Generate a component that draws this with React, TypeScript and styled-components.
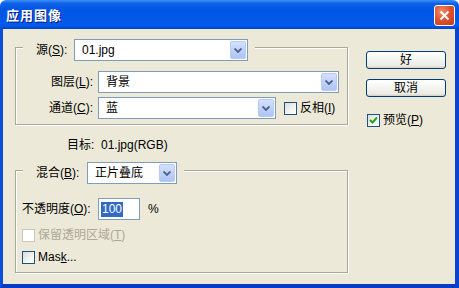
import React from "react";
import styled, { createGlobalStyle } from "styled-components";

const GlobalStyle = createGlobalStyle`
  html, body {
    margin: 0;
    padding: 0;
    background: #ffffff;
  }
  body {
    font-family: "Liberation Sans", "Noto Sans CJK SC", sans-serif;
    font-size: 12px;
    color: #000000;
  }
`;

const Window = styled.div`
  width: 459px;
  height: 288px;
  display: flex;
  flex-direction: column;
`;

const TitleBar = styled.div`
  height: 29px;
  flex: none;
  display: flex;
  align-items: center;
  justify-content: space-between;
  padding: 0 4px 0 6px;
  border-radius: 6px 6px 0 0;
  background: linear-gradient(
    180deg,
    #3d8ff7 0%,
    #0f62e8 12%,
    #0054e3 35%,
    #0059eb 75%,
    #005aec 88%,
    #0043d0 100%
  );
`;

const Title = styled.span`
  color: #ffffff;
  font-family: "Noto Sans CJK SC", sans-serif;
  font-weight: 700;
  font-size: 13px;
  text-shadow: 1px 1px #0a1a7a;
  letter-spacing: 1px;
`;

const CloseButton = styled.div`
  width: 21px;
  height: 21px;
  box-sizing: border-box;
  border: 1px solid #ffffff;
  border-radius: 3px;
  background: radial-gradient(circle at 35% 30%, #f09070 0%, #e05530 45%, #c1381a 100%);
  display: flex;
  align-items: center;
  justify-content: center;
  margin-top: 1px;
`;

const Body = styled.div`
  flex: 1;
  display: flex;
  background: #ece9d8;
  border-left: 3px solid #0a4fdc;
  border-right: 4px solid #0844d4;
  border-bottom: 4px solid #0a3bc4;
`;

const LeftColumn = styled.div`
  width: 333px;
  margin-left: 12px;
  padding-top: 18px;
  display: flex;
  flex-direction: column;
`;

const RightColumn = styled.div`
  width: 82px;
  margin-left: 18px;
  padding-top: 22px;
  display: flex;
  flex-direction: column;
`;

const Group = styled.div<{ $height: number; $top?: number }>`
  box-sizing: border-box;
  height: ${(p) => p.$height}px;
  margin-top: ${(p) => p.$top ?? 0}px;
  border: 1px solid #aca899;
  box-shadow: inset 1px 1px #ffffff, 1px 1px #ffffff;
  display: flex;
  flex-direction: column;
`;

const GroupHeader = styled.div`
  align-self: flex-start;
  display: flex;
  align-items: center;
  margin: -9px 0 0 7px;
  padding: 0 7px 0 13px;
  background: #ece9d8;
`;

const Label = styled.span<{ $disabled?: boolean; $width?: number }>`
  white-space: nowrap;
  color: ${(p) => (p.$disabled ? "#aca899" : "#000000")};
  line-height: 14px;
  ${(p) => (p.$width ? `width: ${p.$width}px; flex: none;` : "")}
`;

const Key = styled.span`
  text-decoration: underline;
  text-underline-offset: 1px;
`;

const FieldRow = styled.div<{ $top: number }>`
  display: grid;
  grid-template-columns: 82px auto;
  align-items: center;
  margin-top: ${(p) => p.$top}px;
`;

const RowLabel = styled(Label)`
  text-align: right;
  padding-right: 5px;
`;

const Inline = styled.div`
  display: flex;
  align-items: center;
  gap: 8px;
`;

const SelectBox = styled.div<{ $width: number }>`
  box-sizing: border-box;
  width: ${(p) => p.$width}px;
  height: 22px;
  border: 1px solid #7f9db9;
  background: #ffffff;
  display: flex;
  align-items: center;
  justify-content: space-between;
  padding: 1px 1px 1px 7px;
`;

const SelectValue = styled.span`
  line-height: 14px;
`;

const DropButton = styled.div`
  box-sizing: border-box;
  width: 16px;
  height: 100%;
  border: 1px solid #b9cbf5;
  border-radius: 2px;
  background: linear-gradient(180deg, #d4e0fd 0%, #c0d2fa 50%, #aec4f4 100%);
  display: flex;
  align-items: center;
  justify-content: center;
`;

const Target = styled.div`
  margin-top: 13px;
  padding-left: 52px;
  line-height: 14px;
`;

const OpacityRow = styled.div`
  display: flex;
  align-items: center;
  margin-top: 14px;
  padding-left: 6px;
`;

const TextInput = styled.div`
  box-sizing: border-box;
  width: 42px;
  height: 22px;
  margin-left: 3px;
  border: 1px solid #7f9db9;
  background: #ffffff;
  display: flex;
  align-items: center;
  padding-left: 2px;
`;

const Selected = styled.span`
  background: #316ac5;
  color: #ffffff;
  line-height: 15px;
  padding: 0 1px;
`;

const Percent = styled.span`
  margin-left: 8px;
`;

const CheckRow = styled.div<{ $top: number; $indent: number }>`
  display: flex;
  align-items: center;
  gap: 3px;
  margin-top: ${(p) => p.$top}px;
  padding-left: ${(p) => p.$indent}px;
`;

const Box = styled.div<{ $disabled?: boolean }>`
  box-sizing: border-box;
  width: 13px;
  height: 13px;
  flex: none;
  border: 1px solid ${(p) => (p.$disabled ? "#cac8bb" : "#1c5180")};
  background: ${(p) =>
    p.$disabled ? "#ffffff" : "linear-gradient(135deg, #dcdcd7 0%, #f4f4f0 60%, #ffffff 100%)"};
  display: flex;
  align-items: center;
  justify-content: center;
`;

const Button = styled.div<{ $top: number }>`
  box-sizing: border-box;
  height: 18px;
  width: 80px;
  margin-top: ${(p) => p.$top}px;
  border: 1px solid #003c74;
  border-radius: 3px;
  background: linear-gradient(180deg, #ffffff 0%, #f3f3ef 50%, #ecebe6 85%, #d6d0c5 100%);
  display: flex;
  align-items: center;
  justify-content: center;
  line-height: 14px;
`;

const Chevron = () => (
  <svg width="8" height="5" viewBox="0 0 8 5">
    <path d="M0.5 0.5 L4 4 L7.5 0.5" fill="none" stroke="#4d6185" strokeWidth="1.8" />
  </svg>
);

const Select = ({ value, width }: { value: string; width: number }) => (
  <SelectBox $width={width}>
    <SelectValue>{value}</SelectValue>
    <DropButton>
      <Chevron />
    </DropButton>
  </SelectBox>
);

const Check = ({ checked, disabled }: { checked?: boolean; disabled?: boolean }) => (
  <Box $disabled={disabled}>
    {checked && (
      <svg width="9" height="9" viewBox="0 0 9 9">
        <path d="M1 4 L3.5 6.5 L8 1.5" fill="none" stroke="#21a121" strokeWidth="2" />
      </svg>
    )}
  </Box>
);

const App = () => (
  <>
    <GlobalStyle />
    <Window>
      <TitleBar>
        <Title>应用图像</Title>
        <CloseButton>
          <svg width="11" height="11" viewBox="0 0 11 11">
            <path d="M1.5 1.5 L9.5 9.5 M9.5 1.5 L1.5 9.5" stroke="#ffffff" strokeWidth="2" />
          </svg>
        </CloseButton>
      </TitleBar>
      <Body>
        <LeftColumn>
          <Group $height={78}>
            <GroupHeader>
              <Label $width={38}>
                源(<Key>S</Key>):
              </Label>
              <Select value="01.jpg" width={174} />
            </GroupHeader>
            <FieldRow $top={10}>
              <RowLabel>
                图层(<Key>L</Key>):
              </RowLabel>
              <Select value="背景" width={241} />
            </FieldRow>
            <FieldRow $top={4}>
              <RowLabel>
                通道(<Key>C</Key>):
              </RowLabel>
              <Inline>
                <Select value="蓝" width={178} />
                <CheckRow $top={0} $indent={0}>
                  <Check />
                  <Label>
                    反相(<Key>I</Key>)
                  </Label>
                </CheckRow>
              </Inline>
            </FieldRow>
          </Group>
          <Target>目标:&nbsp;&nbsp;01.jpg(RGB)</Target>
          <Group $height={103} $top={18}>
            <GroupHeader>
              <Label $width={51}>
                混合(<Key>B</Key>):
              </Label>
              <Select value="正片叠底" width={90} />
            </GroupHeader>
            <OpacityRow>
              <Label $width={73}>
                不透明度(<Key>O</Key>):
              </Label>
              <TextInput>
                <Selected>100</Selected>
              </TextInput>
              <Percent>%</Percent>
            </OpacityRow>
            <CheckRow $top={8} $indent={6}>
              <Check disabled />
              <Label $disabled>
                保留透明区域(<Key>T</Key>)
              </Label>
            </CheckRow>
            <CheckRow $top={8} $indent={6}>
              <Check />
              <Label>
                Mas<Key>k</Key>...
              </Label>
            </CheckRow>
          </Group>
        </LeftColumn>
        <RightColumn>
          <Button $top={0}>好</Button>
          <Button $top={10}>取消</Button>
          <CheckRow $top={16} $indent={1}>
            <Check checked />
            <Label>
              预览(<Key>P</Key>)
            </Label>
          </CheckRow>
        </RightColumn>
      </Body>
    </Window>
  </>
);

export default App;
